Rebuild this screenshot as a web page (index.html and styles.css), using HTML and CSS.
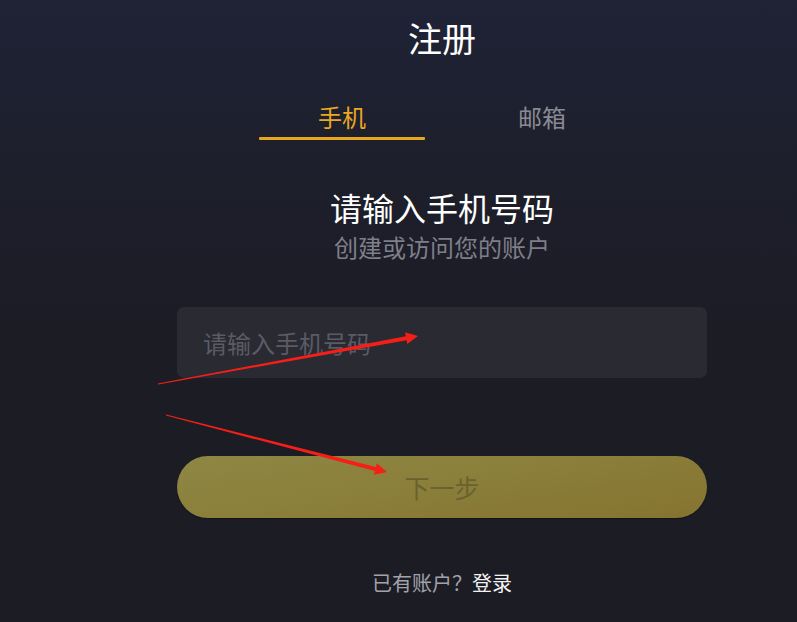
FILE: index.html
```html
<!DOCTYPE html>
<html lang="zh-CN">
<head>
<meta charset="utf-8">
<title>注册</title>
<link rel="stylesheet" href="styles.css">
</head>
<body>
<div class="page">
  <main class="column">
    <h1 class="title">注册</h1>
    <nav class="tabs">
      <div class="tab tab-active">手机<span class="tab-bar"></span></div>
      <div class="tab">邮箱</div>
    </nav>
    <h2 class="heading">请输入手机号码</h2>
    <p class="sub">创建或访问您的账户</p>
    <input class="field" type="text" placeholder="请输入手机号码">
    <button class="next" type="button">下一步</button>
    <p class="footer"><span class="muted">已有账户？</span><a class="login">登录</a></p>
  </main>
  <svg class="arrows" width="797" height="622" viewBox="0 0 797 622">
    <polygon points="157.9,383.5 405.8,336.2 405.1,332.3 418,336 407.3,344.1 406.6,340.2 158.1,384.5" />
    <polygon points="166.1,414.5 375.9,467.1 376.9,463.2 387,472 373.9,474.8 374.9,470.9 165.9,415.5" />
  </svg>
</div>
</body>
</html>
```

FILE: styles.css
```css
* { box-sizing: border-box; }
html, body { margin: 0; padding: 0; }
body {
  font-family: "Noto Sans CJK SC", "Noto Sans", sans-serif;
  background: #1c1c24;
}
.page {
  position: relative;
  width: 797px;
  height: 622px;
  overflow: hidden;
  background: linear-gradient(180deg, #1f2336 0%, #1d1f2c 25%, #1c1c25 55%, #1c1c24 100%);
}
.column {
  width: 530px;
  margin-left: 177px;
  display: flex;
  flex-direction: column;
  align-items: center;
}
.title {
  margin: 14px 0 0;
  font-size: 34px;
  line-height: 48px;
  font-weight: 400;
  color: #ffffff;
}
.tabs {
  width: 366px;
  margin-top: 38px;
  display: flex;
  justify-content: space-between;
}
.tab {
  width: 166px;
  display: flex;
  flex-direction: column;
  align-items: center;
  font-size: 24px;
  line-height: 34px;
  color: #8a8a93;
}
.tab-active { color: #eaa920; }
.tab-bar {
  display: block;
  width: 166px;
  height: 3px;
  margin-top: 3px;
  background: #e8a61d;
  border-radius: 1px;
}
.heading {
  margin: 45px 0 0;
  font-size: 32px;
  line-height: 44px;
  font-weight: 400;
  color: #ffffff;
}
.sub {
  margin: 2px 0 0;
  font-size: 24px;
  line-height: 32px;
  color: #7f7f89;
}
.field {
  width: 530px;
  height: 71px;
  margin-top: 44px;
  padding: 0 26px;
  border: none;
  outline: none;
  border-radius: 7px;
  background: #2a2a33;
  font-family: inherit;
  font-size: 24px;
  color: #ffffff;
}
.field::placeholder { color: #5b5b65; }
.next {
  width: 530px;
  height: 62px;
  margin-top: 78px;
  border: none;
  border-radius: 31px;
  background: linear-gradient(170deg, #8e8744 0%, #8a7e3a 50%, #857430 100%);
  box-shadow: 0 1px 1px rgba(0, 0, 0, 0.35);
  font-family: inherit;
  font-size: 25px;
  color: #6a6130;
}
.footer {
  margin: 51px 0 0;
  font-size: 20px;
  line-height: 28px;
}
.muted { color: #a2a2aa; }
.login { color: #f2f2f2; }
.arrows {
  position: absolute;
  left: 0;
  top: 0;
  pointer-events: none;
}
.arrows polygon { fill: #f51f17; }
```
